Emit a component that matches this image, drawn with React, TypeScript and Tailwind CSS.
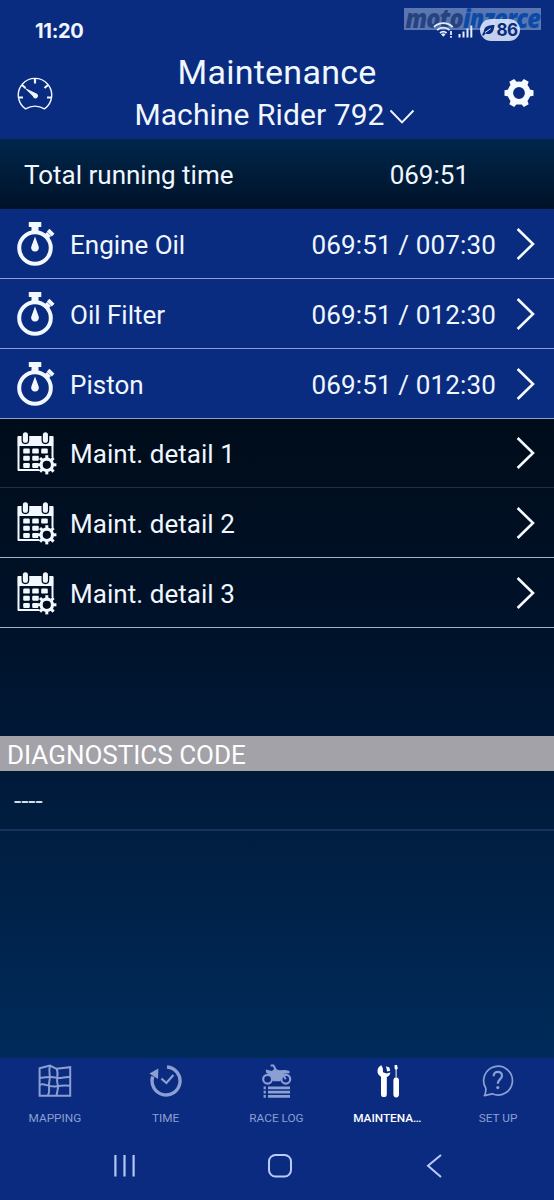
import type { ReactNode } from 'react';

type TimerItem = {
  label: string;
  value: string;
};

type TabItem = {
  label: string;
  icon: ReactNode;
  active?: boolean;
};

const timerItems: TimerItem[] = [
  { label: 'Engine Oil', value: '069:51 / 007:30' },
  { label: 'Oil Filter', value: '069:51 / 012:30' },
  { label: 'Piston', value: '069:51 / 012:30' },
];

const detailItems = ['Maint. detail 1', 'Maint. detail 2', 'Maint. detail 3'];

const gearTeeth = [0, 45, 90, 135, 180, 225, 270, 315];

function GaugeIcon() {
  return (
    <svg width="36" height="34" viewBox="0 0 36 34" fill="none" stroke="#eef6ff" strokeWidth="1.4" aria-hidden="true">
      <path d="M8.5 31.8A16.7 16.7 0 1 1 27.5 31.8Q18 26.4 8.5 31.8Z" strokeLinejoin="round" />
      <path d="M18 1.5v5M5 8l3.5 3M31 8l-3.5 3M1.5 20.5h4.5M34.5 20.5H30" strokeWidth="2.2" />
      <path d="M7 10.5 19.5 16.4a2.6 2.6 0 1 1-3.6 2.8Z" fill="#eef6ff" stroke="none" />
    </svg>
  );
}

function GearIcon() {
  return (
    <svg width="30" height="28" viewBox="-15 -14 30 28" aria-hidden="true">
      <circle r="8.7" fill="none" stroke="#f6fbff" strokeWidth="5.6" />
      {[0, 60, 120, 180, 240, 300].map((angle) => (
        <path key={angle} d="M9 -3.8 14.5 -2.8V2.8L9 3.8Z" fill="#f6fbff" transform={`rotate(${angle})`} />
      ))}
    </svg>
  );
}

function StopwatchIcon() {
  return (
    <svg width="38" height="46" viewBox="0 0 38 46" fill="#f2f8ff" aria-hidden="true">
      <circle cx="18" cy="27" r="15.8" fill="none" stroke="#f2f8ff" strokeWidth="4" />
      <rect x="11.8" y="1" width="12.5" height="5" rx="0.6" />
      <rect x="14.5" y="5" width="7" height="6" />
      <path d="m29.8 10.4 2.7-2.7 5 5-2.7 2.7Z" />
      <path d="m28 13 2-2 4 4-2 2Z" />
      <path d="M18 15.6 21.5 25a3.9 3.9 0 1 1-7 0Z" />
    </svg>
  );
}

function CalendarIcon() {
  return (
    <svg width="40" height="44" viewBox="0 0 40 44" aria-hidden="true">
      <path d="M1.5 6h34v33h-34Z" fill="none" stroke="#f2f8ff" strokeWidth="2" strokeLinejoin="round" />
      <path d="M0.8 5.5h35.4V15H0.8Z" fill="#f2f8ff" />
      <g fill="#f2f8ff" stroke="#010d1d" strokeWidth="1.3">
        <rect x="5.2" y="0.5" width="6.4" height="12" rx="3.2" />
        <rect x="25.2" y="0.5" width="6.4" height="12" rx="3.2" />
      </g>
      <g fill="#f2f8ff">
        <rect x="6.2" y="17.6" width="6.6" height="5" rx="1.2" />
        <rect x="15.2" y="17.6" width="6.6" height="5" rx="1.2" />
        <rect x="24.2" y="17.6" width="6.6" height="5" rx="1.2" />
        <rect x="6.2" y="24.8" width="6.6" height="5" rx="1.2" />
        <rect x="15.2" y="24.8" width="6.6" height="5" rx="1.2" />
        <rect x="6.2" y="32" width="6.6" height="5" rx="1.2" />
        <rect x="15.2" y="32" width="6.6" height="5" rx="1.2" />
      </g>
      <g transform="translate(29.8 33.8)">
        <circle r="9" fill="#010d1d" />
        <circle r="5.7" fill="none" stroke="#f2f8ff" strokeWidth="3.2" />
        {gearTeeth.map((angle) => (
          <rect key={angle} x="6.2" y="-1.5" width="3.4" height="3" fill="#f2f8ff" transform={`rotate(${angle})`} />
        ))}
      </g>
    </svg>
  );
}

function RowChevron() {
  return (
    <svg width="20" height="34" viewBox="0 0 20 34" fill="none" stroke="#f4faff" strokeWidth="2.6" aria-hidden="true">
      <path d="m1.6 2 15.4 15L1.6 32" />
    </svg>
  );
}

function StatusIcons() {
  return (
    <svg width="40" height="18" viewBox="0 0 40 18" fill="none" stroke="#e3ecff" aria-hidden="true">
      <path d="M1 6a13 13 0 0 1 18.6 0M4 9.2a8.8 8.8 0 0 1 12.6 0M7 12a4.8 4.8 0 0 1 6.6 0" strokeWidth="1.8" />
      <path d="m10.3 15.8-2.2-2.3a3 3 0 0 1 4.4 0Z" fill="#e3ecff" stroke="none" />
      <path d="M18 10v4M18 15v1.8" strokeWidth="1.8" />
      <path d="M26.5 13v3.5M30.5 10.5v6M34.5 7.5v9M38.3 4.5v12" strokeWidth="2" />
    </svg>
  );
}

function MapIcon() {
  return (
    <svg width="34" height="34" viewBox="0 0 34 34" fill="none" stroke="currentColor" strokeWidth="2" aria-hidden="true">
      <path d="M1.6 4.2 12 1.6 18.5 4.8 32.2 3.2V31.8H1.6Z" />
      <path d="M12 1.4C10 8 13 12 11.4 17S13 26 9.8 32M18.5 4.8C21.5 10 17.6 15 19.6 20S18 28 18.8 32" />
      <path d="M1.2 13.5c6 1 9-2 17.8.4 5 .8 8-1.6 13.5-.8M1.2 21c5-3 9 3 18 1.2 5-1 8-1 13.3-.4" />
    </svg>
  );
}

function TimeIcon() {
  return (
    <svg width="34" height="34" viewBox="0 0 34 34" fill="none" stroke="currentColor" aria-hidden="true">
      <path d="M18 3a14 14 0 1 1-14.2 9.5" strokeWidth="3.4" />
      <path d="M0.4 9.6 9.4 4.6 9 15Z" fill="currentColor" stroke="none" />
      <path d="m12.4 14.6 5 4.4 7-8" strokeWidth="2.2" />
    </svg>
  );
}

function RaceLogIcon() {
  return (
    <svg width="32" height="34" viewBox="0 0 32 34" fill="none" stroke="currentColor" aria-hidden="true">
      <circle cx="6.6" cy="15.2" r="4.4" strokeWidth="2.2" />
      <circle cx="24.8" cy="15.2" r="4.4" strokeWidth="2.2" />
      <path d="M4.8 5.6 11 7 13.4 4.8 18.4 6.2l6-.2 4.2 1v2.2l-5.6.6-3.6 7.4h-7L10 12 5 8.6Z" fill="currentColor" stroke="none" />
      <path d="M15 6 12.4 1.6H9.6M20 8l4.8 7.2" strokeWidth="2" />
      <path d="M2.6 23.8h2.2M2.6 28.2h2.2M2.6 32.4h2.2M7 23.8h22M7 28.2h22M7 32.4h22" strokeWidth="2.7" />
    </svg>
  );
}

function ToolsIcon() {
  return (
    <svg width="24" height="34" viewBox="0 0 24 34" fill="currentColor" aria-hidden="true">
      <path d="M5.4 1.2a6.4 6.4 0 0 0-.4 11.6v17.4a2.9 2.9 0 0 0 5.8 0V13a5.6 5.6 0 0 0 3.6-4.6L10.4 9.6 7 8.2 6.8 4.2Z" />
      <path d="m10 2.2 3.4 1.4.8 3.2-3 .8Z" />
      <path d="M18.6 1h2.4l.8 3.4-1.2 1.4v8h1.4l1 2v14.8a2.8 2.8 0 0 1-5.6 0V15.8l1-2h1.2v-8l-1-1.4Z" />
    </svg>
  );
}

function HelpIcon() {
  return (
    <svg width="34" height="34" viewBox="0 0 34 34" fill="none" stroke="currentColor" strokeWidth="1.7" aria-hidden="true">
      <path d="M3.8 24.2A14.4 14.4 0 1 1 10.2 29.8L2.4 31.6Q4.2 28.4 3.8 24.2Z" strokeLinejoin="round" />
      <path d="M11.6 12.2c0-6 8.8-5.6 8.4-.4-.2 3.4-4.2 3.4-4.2 8" strokeWidth="2.2" />
      <circle cx="15.8" cy="23.6" r="1.6" fill="currentColor" stroke="none" />
    </svg>
  );
}

const tabs: TabItem[] = [
  { label: 'MAPPING', icon: <MapIcon /> },
  { label: 'TIME', icon: <TimeIcon /> },
  { label: 'RACE LOG', icon: <RaceLogIcon /> },
  { label: 'MAINTENA…', icon: <ToolsIcon />, active: true },
  { label: 'SET UP', icon: <HelpIcon /> },
];

export default function App() {
  return (
    <main className="flex h-[1200px] w-[554px] flex-col overflow-hidden bg-[#001126] font-[Roboto,sans-serif] text-[#f0f7ff]">
      <header className="h-[139px] shrink-0 bg-[#0a2c80]">
        <div className="relative flex h-[52px] items-start justify-between pl-[35px] pr-[34px] pt-[19px]">
          <div className="absolute left-[404px] top-2 flex h-[22px] w-[137px] items-center justify-center bg-[#a9bfe6]/50 pb-0.5">
            <span className="block scale-x-[0.9] font-['Open_Sans',sans-serif] text-[26px] font-extrabold italic leading-none tracking-[-0.9px] text-[#26437f]">
              moto<span className="text-[#0b4aa6]">inzerce</span>
            </span>
          </div>

          <span className="font-[Inter,sans-serif] text-[20px] font-bold leading-6 tracking-[-0.3px]">11:20</span>

          <div className="relative flex items-center gap-[7px]">
            <StatusIcons />
            <span className="flex h-[22px] w-10 items-center justify-center gap-px rounded-full bg-[#e3edff]/85 font-[Inter,sans-serif] text-[17px] font-bold leading-4 tracking-[-0.5px] text-[#0a2c80]">
              <svg width="13" height="13" viewBox="0 0 13 13" aria-hidden="true">
                <path d="M12.5 1C6 1 2 3 2 7l-2 4 1.4.8L3.6 9.6C9 11.5 12 8 12.5 1Z" fill="#0a2c80" />
                <path d="M3 8.6 8.6 4.6" stroke="#e3edff" />
              </svg>
              86
            </span>
          </div>
        </div>

        <div className="flex justify-between pl-[17px] pr-5">
          <button type="button" className="mt-[25px] h-[34px]" aria-label="Dashboard">
            <GaugeIcon />
          </button>

          <div className="flex flex-col items-center">
            <h1 className="text-[34px] leading-10 tracking-[0.25px]">Maintenance</h1>
            <button type="button" className="mr-[5px] mt-[3px] flex items-center gap-1 text-[30px] leading-10 tracking-[0.08px]">
              <span>Machine Rider 792</span>
              <svg width="26" height="16" viewBox="0 0 26 16" fill="none" stroke="currentColor" strokeWidth="1.9" className="mt-1" aria-hidden="true">
                <path d="m1.5 1.5 11.5 12L24.5 1.5" />
              </svg>
            </button>
          </div>

          <button type="button" className="mt-[27px] flex h-7 w-[33px] justify-end" aria-label="Settings">
            <GearIcon />
          </button>
        </div>
      </header>

      <section className="flex h-[70px] shrink-0 items-center justify-between bg-linear-to-b from-[#00274c] to-[#001228] pl-6 pr-[85px] pt-[3px] text-[26px]">
        <span>Total running time</span>
        <span>069:51</span>
      </section>

      <ul className="shrink-0">
        {timerItems.map((item) => (
          <li key={item.label} className="flex h-[70px] items-center border-b border-[#8b9fd0] bg-[#0a2c80] pl-[17px] pr-[18px] text-[26px]">
            <StopwatchIcon />
            <span className="ml-[15px] flex-1 pt-[3px]">{item.label}</span>
            <span className="mr-5 pt-[3px] tracking-[0.15px]">{item.value}</span>
            <RowChevron />
          </li>
        ))}
      </ul>

      <ul className="shrink-0 bg-linear-to-b from-[#000c1a] to-[#00122a]">
        {detailItems.map((label, index) => (
          <li
            key={label}
            className={`flex items-center border-b pl-[17px] pr-[18px] text-[26px] ${
              index === 0 ? 'h-[69px] border-[#1e2f49]' : 'h-[70px] border-[#a7b2c4]'
            }`}
          >
            <CalendarIcon />
            <span className="ml-[13px] flex-1 pt-[3px] tracking-[0.05px]">{label}</span>
            <RowChevron />
          </li>
        ))}
      </ul>

      <section className="flex flex-1 flex-col bg-linear-to-b from-[#00122a] to-[#002b5b] pt-[108px]">
        <h2 className="h-[35px] bg-[#a3a2a8] pl-[7px] pt-[2px] text-[26px] leading-[35px] text-white">DIAGNOSTICS CODE</h2>
        <p className="h-[60px] border-b-2 border-[#1a315b] pl-[14px] text-[26px] leading-[60px] text-[#d3deee]">----</p>
      </section>

      <nav className="grid h-[74px] shrink-0 grid-cols-5 bg-[#0b2b80]">
        {tabs.map((tab) => (
          <button
            key={tab.label}
            type="button"
            className={`flex flex-col items-center pt-1.5 text-[11.8px] leading-4 ${
              tab.active ? 'font-medium text-white' : 'text-[#8b9fd2]'
            }`}
          >
            {tab.icon}
            <span className="mr-px mt-3">{tab.label}</span>
          </button>
        ))}
      </nav>

      <footer className="flex h-[68px] shrink-0 items-start justify-between bg-[#0b2b80] pl-[113px] pr-[111px] pt-[21px]">
        <svg width="23" height="26" viewBox="0 0 23 26" stroke="#b3c6f5" strokeWidth="2.2" aria-hidden="true">
          <path d="M2.4 2v21.5M11.5 2v21.5M20.6 2v21.5" />
        </svg>
        <svg width="26" height="26" viewBox="0 0 26 26" fill="none" stroke="#b9cbfa" strokeWidth="2" className="mr-0.5" aria-hidden="true">
          <rect x="2" y="2" width="22" height="21.5" rx="6.5" />
        </svg>
        <svg width="18" height="26" viewBox="0 0 18 26" fill="none" stroke="#b9cbfa" strokeWidth="2" aria-hidden="true">
          <path d="M16 2 3 12.8 16 24" />
        </svg>
      </footer>
    </main>
  );
}
